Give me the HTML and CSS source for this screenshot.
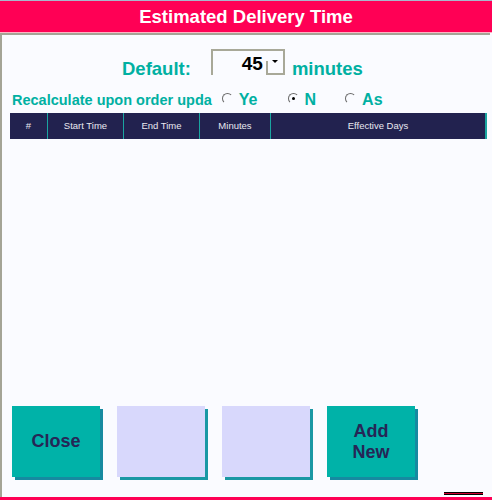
FILE: index.html
```html
<!DOCTYPE html>
<html>
<head>
<meta charset="utf-8">
<link rel="stylesheet" href="styles.css">
</head>
<body>
<div class="window">
  <div class="titlebar">Estimated Delivery Time</div>
  <div class="content">
    <div class="default-row">
      <span class="label-lg">Default:</span>
      <div class="combo">
        <span class="combo-value">45</span>
        <span class="combo-btn"><span class="arrow"></span></span>
      </div>
      <span class="label-lg">minutes</span>
    </div>
    <div class="radio-row">
      <span class="label-sm">Recalculate upon order upda</span>
      <span class="radio r1"><span class="circle"></span>Ye</span>
      <span class="radio r2"><span class="circle checked"></span>N</span>
      <span class="radio r3"><span class="circle"></span>As</span>
    </div>
    <div class="grid-header">
      <div class="col c1">#</div>
      <div class="col c2">Start Time</div>
      <div class="col c3">End Time</div>
      <div class="col c4">Minutes</div>
      <div class="col c5">Effective Days</div>
    </div>
    <div class="spacer"></div>
    <div class="buttons">
      <div class="btn teal">Close</div>
      <div class="btn light"></div>
      <div class="btn light"></div>
      <div class="btn teal">Add<br>New</div>
    </div>
    <div class="bottom-row"><span class="mark"></span></div>
  </div>
  <div class="bottom-line"></div>
</div>
</body>
</html>
```

FILE: styles.css
```css
html, body {
  margin: 0;
  padding: 0;
}
body {
  width: 492px;
  height: 500px;
  overflow: hidden;
  background: #fafbff;
  font-family: "Liberation Sans", Arial, sans-serif;
}
.window {
  display: flex;
  flex-direction: column;
  height: 500px;
}
.titlebar {
  height: 31px;
  border-top: 1px solid #a8b6cc;
  background: #ff0055;
  color: #ffffff;
  font-weight: bold;
  font-size: 18.5px;
  line-height: 31px;
  text-align: center;
  box-shadow: 0 1px 0 #ffb4c4;
  margin-bottom: 1px;
}
.content {
  flex: 1;
  display: flex;
  flex-direction: column;
  border-top: 2px solid #a4a496;
  border-left: 2px solid #a4a496;
  margin-right: 2px;
}
.default-row {
  display: flex;
  align-items: flex-start;
  padding-left: 120px;
  margin-top: 14px;
  height: 27px;
}
.label-lg {
  color: #00b0a2;
  font-weight: bold;
  font-size: 18.5px;
  line-height: 20px;
  margin-top: 10px;
}
.combo {
  position: relative;
  width: 70px;
  height: 24px;
  margin-left: 20px;
  margin-right: 7px;
  border-top: 2px solid #a8a898;
  border-left: 2px solid #a8a898;
  border-right: 2px solid #a8a898;
  display: flex;
  align-items: center;
  justify-content: flex-end;
}
.combo-value {
  font-weight: bold;
  font-size: 19px;
  color: #000;
  margin-right: 3px;
  margin-top: 2px;
}
.combo-btn {
  width: 15px;
  height: 12px;
  align-self: flex-end;
  border-left: 2px solid #a8a898;
  border-bottom: 2px solid #a8a898;
  position: relative;
}
.arrow {
  position: absolute;
  left: 4px;
  top: -1px;
  width: 0;
  height: 0;
  border-left: 3px solid transparent;
  border-right: 3px solid transparent;
  border-top: 3px solid #000;
}
.radio-row {
  display: flex;
  align-items: center;
  padding-left: 10px;
  margin-top: 16px;
  height: 16px;
  color: #00b0a2;
  font-weight: bold;
}
.label-sm {
  font-size: 14.5px;
}
.radio {
  display: flex;
  align-items: center;
  font-size: 16px;
}
.r1 { margin-left: 10px; }
.r2 { margin-left: 30px; }
.r3 { margin-left: 29px; }
.circle {
  width: 9px;
  height: 9px;
  border-radius: 50%;
  border: 1px solid transparent;
  border-top-color: #6a6a6a;
  border-left-color: #6a6a6a;
  margin-right: 6px;
  margin-top: -3px;
  position: relative;
}
.circle.checked::after {
  content: "";
  position: absolute;
  left: 3px;
  top: 3px;
  width: 3px;
  height: 3px;
  border-radius: 50%;
  background: #000;
}
.grid-header {
  display: flex;
  margin-top: 5px;
  margin-left: 8px;
  width: 477px;
  height: 26px;
  background: #22224f;
  border-right: 2px solid #1aa5a0;
  box-sizing: border-box;
}
.col {
  color: #e8e8f0;
  font-size: 9.5px;
  line-height: 26px;
  text-align: center;
  border-right: 1px solid #1aa5a0;
}
.c1 { width: 37px; }
.c2 { width: 75px; }
.c3 { width: 75px; }
.c4 { width: 70px; }
.c5 { flex: 1; border-right: 0; }
.spacer {
  flex: 1;
}
.buttons {
  display: flex;
  gap: 17px;
  padding-left: 10px;
  margin-bottom: 15px;
}
.btn {
  width: 88px;
  height: 71px;
  display: flex;
  align-items: center;
  justify-content: center;
  text-align: center;
  color: #262656;
  font-weight: bold;
  font-size: 18px;
  line-height: 21px;
}
.btn.teal {
  background: #00b2a8;
  box-shadow: 3px 3px 0 #168aa0;
}
.btn.light {
  background: #d8d8fc;
  box-shadow: 3px 3px 0 #1a98a4;
}
.bottom-row {
  display: flex;
  justify-content: flex-end;
  height: 3px;
  padding-right: 7px;
  margin-bottom: 2px;
}
.mark {
  width: 39px;
  height: 1px;
  background: #d00030;
  border-top: 1px solid #000;
  border-bottom: 1px solid #000;
}
.bottom-line {
  height: 3px;
  background: #ff0055;
}
```
